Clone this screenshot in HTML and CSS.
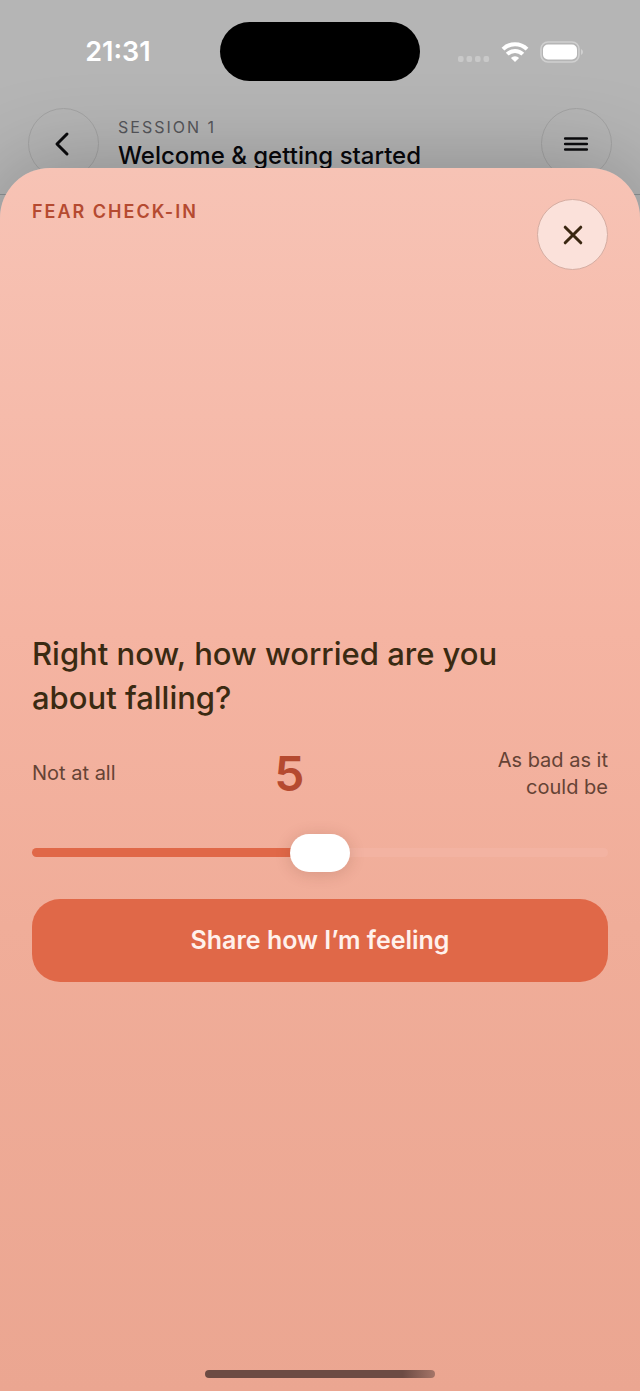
FILE: index.html
```html
<!DOCTYPE html>
<html lang="en">
<head>
    <meta charset="UTF-8">
    <meta name="viewport" content="width=device-width, initial-scale=1.0">
    <title>Fear check-in</title>
    <link rel="stylesheet" href="styles.css">
</head>
<body>
    <header class="session">
        <div class="status-bar">
            <span class="time">21:31</span>
            <span class="island"></span>
            <span class="status-icons">
                <svg class="signal" width="32" height="6" viewBox="0 0 32 6" fill="#c9c9c9">
                    <rect x="0" width="5.600" height="6" rx="2"/>
                    <rect x="8.500" width="5.600" height="6" rx="2"/>
                    <rect x="17" width="5.600" height="6" rx="2"/>
                    <rect x="25.500" width="5.600" height="6" rx="2"/>
                </svg>
                <svg width="28" height="20" viewBox="0 0 28 20" fill="none" stroke="#fff" stroke-width="4">
                    <path d="M2 7.2a17 17 0 0 1 24 0"/>
                    <path d="M6.2 12.200a11 11 0 0 1 15.600 0"/>
                    <path d="M9.900 15.900a5.800 5.800 0 0 1 8.200 0L14 20z" fill="#fff" stroke="none"/>
                </svg>
                <svg width="44" height="22" viewBox="0 0 44 22">
                    <rect x="1" y="1" width="38" height="20" rx="7" fill="none" stroke="#d0d0d0" stroke-width="1.6"/>
                    <rect x="3" y="3.500" width="34" height="15" rx="5" fill="#fff"/>
                    <path d="M41 8q2 1 2 3t-2 3z" fill="#d0d0d0"/>
                </svg>
            </span>
        </div>
        <div class="session-bar">
            <button class="round-button" aria-label="Back">
                <svg width="36" height="36" viewBox="0 0 36 36">
                    <path d="M21 8L11 18l10 10"/>
                </svg>
            </button>
            <div class="session-title">
                <p class="session-number">SESSION 1</p>
                <h1>Welcome &amp; getting started</h1>
            </div>
            <button class="round-button" aria-label="Menu">
                <svg class="menu-icon" width="36" height="36" viewBox="0 0 36 36">
                    <path d="M6.200 12.500h21.600M6.200 18h21.600M6.200 23.500h21.600"/>
                </svg>
            </button>
        </div>
    </header>

    <main class="sheet">
        <div class="sheet-header">
            <h2>FEAR CHECK-IN</h2>
            <button class="round-button close-button" aria-label="Close">
                <svg width="36" height="36" viewBox="0 0 36 36">
                    <path d="M10.200 10.200l15.600 15.600M25.800 10.200L10.200 25.800"/>
                </svg>
            </button>
        </div>
        <form class="check-in" id="check-in">
            <label class="question" for="fear">Right now, how worried are you about falling?</label>
            <div class="scale">
                <span>Not at all</span>
                <output class="score" id="score" for="fear">5</output>
                <span class="scale-max">As bad as it could be</span>
            </div>
            <input class="slider" type="range" id="fear" name="fear" min="0" max="10" value="5">
            <button class="share-button" type="submit">Share how I’m feeling</button>
        </form>
        <div class="home-indicator"></div>
    </main>

    <script>
        const slider = document.getElementById('fear');
        const score = document.getElementById('score');

        // Update the number and the filled part of the track
        slider.addEventListener('input', () => {
            score.textContent = slider.value;
            slider.style.setProperty('--filled', slider.value * 10 + '%');
        });

        document.getElementById('check-in').addEventListener('submit', (e) => {
            e.preventDefault();
        });
    </script>
</body>
</html>
```

FILE: styles.css
```css
* {
    box-sizing: border-box;
}
body {
    display: flex;
    flex-direction: column;
    min-height: 100vh;
    margin: 0;
    background-color: #b5b5b5;
    font-family: Inter, sans-serif;
}
h1, h2, p {
    margin: 0;
}
button {
    font-family: inherit;
    cursor: pointer;
}

/* Session page behind the sheet */
.session {
    height: 195px;
    border-bottom: 1px solid #8f9294;
}
.status-bar {
    display: grid;
    grid-template-columns: 1fr 200px 1fr;
    align-items: center;
    padding-top: 22px;
}
.time {
    padding-left: 16px;
    color: #fff;
    font-size: 27px;
    font-weight: 600;
    text-align: center;
}
.island {
    height: 59px;
    border-radius: 30px;
    background-color: #000;
}
.status-icons {
    display: flex;
    justify-content: center;
    align-items: center;
    gap: 11px;
    padding-right: 18px;
}
.signal {
    margin-top: 14px;
}
.session-bar {
    display: flex;
    align-items: flex-start;
    gap: 19px;
    padding: 27px 28px 0;
}
.session-title {
    flex: 1;
    padding-top: 8px;
}
.session-number {
    color: #55555a;
    font-size: 16px;
    line-height: 22px;
    letter-spacing: 2px;
}
.session h1 {
    color: #08080c;
    font-size: 24px;
    font-weight: 500;
    line-height: 36px;
}
.round-button {
    display: flex;
    flex: none;
    justify-content: center;
    align-items: center;
    width: 71px;
    height: 71px;
    padding: 0;
    border: 1px solid #a3a3a3;
    border-radius: 50%;
    background-color: transparent;
    color: #0a0a0c;
}
.round-button svg {
    fill: none;
    stroke: currentColor;
    stroke-width: 3;
    stroke-linecap: round;
    stroke-linejoin: round;
}
.round-button .menu-icon {
    stroke-width: 2.6;
}

/* Sheet */
.sheet {
    position: relative;
    display: flex;
    flex: 1;
    flex-direction: column;
    margin-top: -27px;
    padding: 31px 32px 0;
    border-radius: 50px 50px 0 0;
    background: linear-gradient(#f7c3b5, #f5b4a2 38%, #f0ad99 62%, #eba691);
    box-shadow: 0 0 90px rgba(0, 0, 0, 0.25);
}
.sheet-header {
    display: flex;
    justify-content: space-between;
    align-items: flex-start;
}
.sheet h2 {
    color: #b54a30;
    font-size: 18px;
    font-weight: 600;
    line-height: 26px;
    letter-spacing: 2px;
}
.close-button {
    border-color: #d5ada2;
    background-color: #fbe1da;
    color: #3a2711;
}
.check-in {
    display: flex;
    flex: 1;
    flex-direction: column;
    justify-content: center;
}
.question {
    padding-right: 32px;
    color: #3a2a12;
    font-size: 31px;
    font-weight: 500;
    line-height: 44px;
}
.scale {
    display: flex;
    justify-content: space-between;
    align-items: center;
    margin-top: 27px;
    color: #654335;
    font-size: 20px;
    line-height: 27px;
}
.scale-max {
    width: 145px;
    text-align: right;
}
.score {
    color: #b54a30;
    font-size: 48px;
    font-weight: 600;
}
.slider {
    --filled: 50%;
    width: 100%;
    height: 38px;
    margin: 33px 0 27px;
    background: transparent;
    appearance: none;
}
.slider::-webkit-slider-runnable-track {
    height: 9px;
    border-radius: 5px;
    background: linear-gradient(to right, #e06848 var(--filled), #f3b3a2 var(--filled));
}
.slider::-webkit-slider-thumb {
    width: 60px;
    height: 38px;
    margin-top: -14px;
    border-radius: 19px;
    background-color: #fff;
    box-shadow: 0 2px 16px rgba(90, 40, 20, 0.18);
    appearance: none;
}
.share-button {
    height: 83px;
    border: none;
    border-radius: 28px;
    background-color: #e06848;
    color: #fff1ec;
    font-size: 25px;
    font-weight: 600;
}
.home-indicator {
    width: 230px;
    height: 8px;
    margin: 27px auto 13px;
    border-radius: 4px;
    background: linear-gradient(to right, #6c4b43 86%, #a57568);
}
```
